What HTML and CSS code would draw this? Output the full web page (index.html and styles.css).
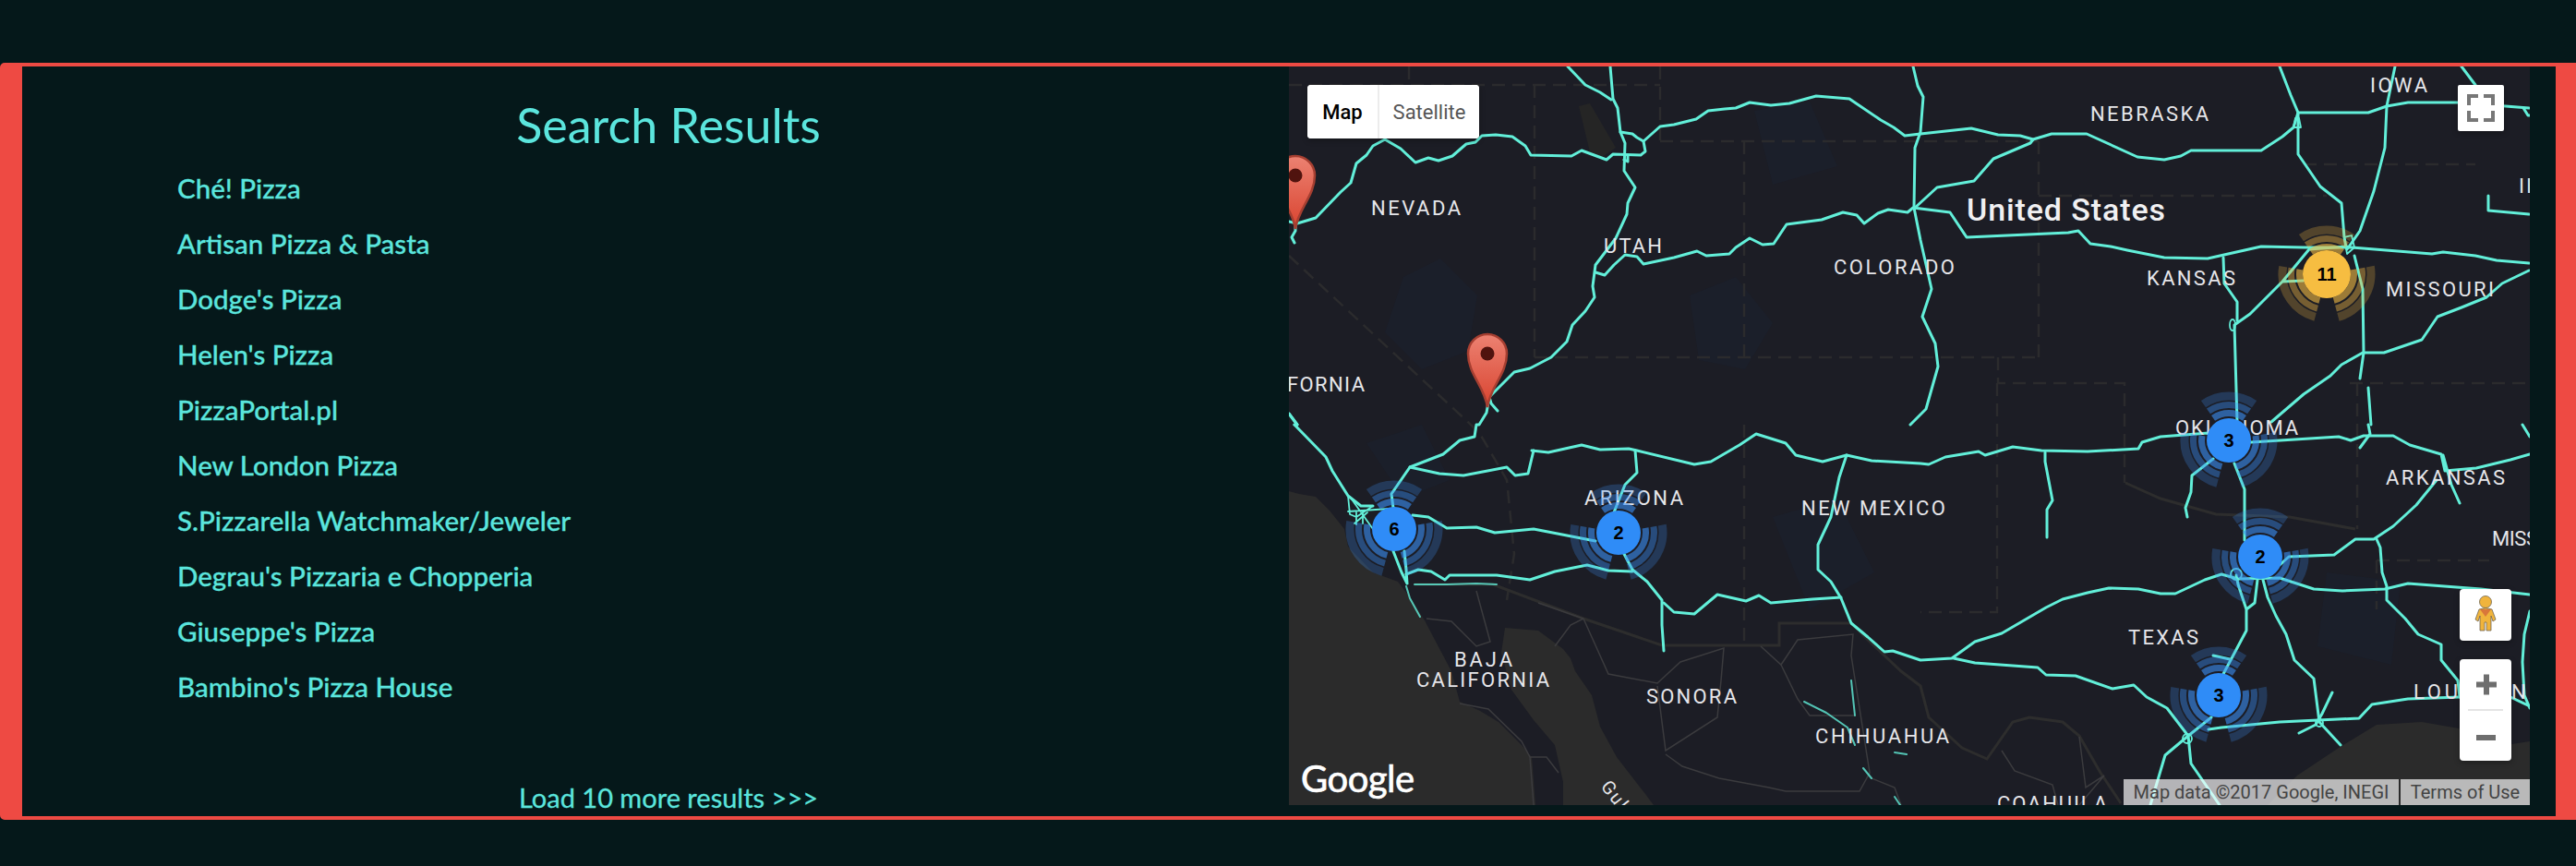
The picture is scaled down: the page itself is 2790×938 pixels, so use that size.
FILE: index.html
```html
<!DOCTYPE html>
<html lang="en">
<head>
<meta charset="utf-8">
<title>Search Results</title>
<link rel="stylesheet" href="styles.css">
</head>
<body>
<main class="panel">
  <section class="results">
    <h1 class="results-title">Search Results</h1>
    <ul class="result-list">
      <li><a href="#">Ché! Pizza</a></li>
      <li><a href="#">Artisan Pizza &amp; Pasta</a></li>
      <li><a href="#">Dodge's Pizza</a></li>
      <li><a href="#">Helen's Pizza</a></li>
      <li><a href="#">PizzaPortal.pl</a></li>
      <li><a href="#">New London Pizza</a></li>
      <li><a href="#">S.Pizzarella Watchmaker/Jeweler</a></li>
      <li><a href="#">Degrau's Pizzaria e Chopperia</a></li>
      <li><a href="#">Giuseppe's Pizza</a></li>
      <li><a href="#">Bambino's Pizza House</a></li>
    </ul>
    <a class="load-more" href="#">Load 10 more results &gt;&gt;&gt;</a>
  </section>

  <section class="map">
    <svg class="map-canvas" viewBox="1396 72 1344 800" width="1344" height="800" xmlns="http://www.w3.org/2000/svg">
      <defs>
        <linearGradient id="pin-fill" x1="0" y1="0" x2="0" y2="1">
          <stop offset="0" stop-color="#ec8272"/>
          <stop offset="1" stop-color="#d9432f"/>
        </linearGradient>
        <g id="pin">
          <path d="M0 0 C-3 -22 -21 -36 -21 -58 A21 21 0 1 1 21 -58 C21 -36 3 -22 0 0 Z" fill="url(#pin-fill)" stroke="#a63f31" stroke-width="2.5"/>
          <circle cx="0" cy="-58" r="7.5" fill="#50130e"/>
        </g>
        <g id="rings" fill="none" transform="rotate(-125)">
          <circle r="29.5" pathLength="360" stroke-dasharray="70 45 85 30 85 45" stroke-width="7" stroke-opacity=".6"/>
          <circle r="38.5" pathLength="360" stroke-dasharray="70 45 85 30 85 45" stroke-width="7" stroke-opacity=".42"/>
          <circle r="48" pathLength="360" stroke-dasharray="70 45 85 30 85 45" stroke-width="9" stroke-opacity=".25"/>
        </g>
      </defs>

      <rect x="1396" y="72" width="1344" height="800" class="land"/>
      <g class="water">
        <path d="M1396 532L1407 535L1425 538L1440 553L1456 573L1460 592L1487 620L1514 630L1527 647L1543 672L1554 693L1572 727L1581 760L1603 770L1623 782L1648 807L1659 820L1663 872L1396 872Z"/>
        <path d="M1630 680L1666 683L1693 703L1701 713L1706 727L1724 753L1733 787L1751 820L1782 860L1791 872L1693 872L1693 847L1684 807L1661 780L1637 747L1626 707Z"/>
        <path d="M2456 872L2488 840L2533 810L2574 785L2623 782L2669 790L2714 807L2740 803L2740 872Z"/>
      </g>
      <g class="patches">
        <path d="M1520 300L1560 280L1600 320L1590 380L1540 400L1500 360Z"/>
        <path d="M1830 320L1880 300L1920 350L1890 400L1840 390Z"/>
        <path d="M1480 480L1540 460L1570 520L1520 540Z"/>
        <path d="M1920 560L1990 540L2030 620L1960 660Z"/>
        <path d="M2520 620L2600 630L2590 720L2510 700Z"/>
        <path d="M1900 120L1960 110L1990 180L1920 200Z"/>
      </g>
      <path class="salt" d="M1710 115L1722 112L1750 160L1735 170L1722 165Z"/>

      <g class="borders-dashed">
        <path d="M1396 92H1798M1526 72V92M1662 92V387M1798 72V153M1798 153H2208M1662 387H2208"/>
        <path d="M1396 277L1593 460L1603 470L1632 520L1640 600L1632 650"/>
        <path d="M1889 153V387M1889 460V699M2208 153V387M2208 212H2520M2164 387V415H2301V523M2545 415H2739M2495 178H2681"/>
        <path d="M2163 415V663H2080M2553 415V573M2574 607H2696M2574 607V660"/>
      </g>
      <g class="borders-solid">
        <path d="M1532 633L1617 633L1715 670L1800 699L1927 699L1927 675L2005 675L2023 693L2059 727L2080 743L2089 777L2125 810L2152 822L2180 782L2198 777L2234 782L2252 797L2275 837L2297 870"/>
        <path d="M2302 523L2340 540L2400 557L2480 560L2551 573"/>
      </g>
      <g class="roads-minor">
        <path d="M1545 670L1572 673L1599 700L1614 695L1599 640"/>
        <path d="M1666 653L1715 670L1742 730L1795 740L1820 717L1867 702L1864 737L1860 777L1804 813L1795 743"/>
        <path d="M1804 817L1822 830L1862 843L1916 853L1934 857L2014 857L2025 837L2005 710L2007 687L1947 693L1929 720L1907 700"/>
        <path d="M1929 720L1947 757L1960 775L2009 775"/>
        <path d="M1581 762L1612 768L1648 803L1657 820L1675 820L1688 837M1661 872L1657 820M1684 700L1701 677L1715 670"/>
        <path d="M2027 843L2052 853L2059 872M2168 813L2182 835L2223 850L2229 872M2252 798L2259 853L2279 840L2252 872"/>
      </g>

      <g class="roads">
        <path d="M1396 240L1405 242L1425 236L1452 208L1463 198L1469 177L1480 168L1487 158L1500 151L1517 161L1533 176L1547 171L1558 174L1573 169L1588 156L1598 154L1605 147L1620 146L1638 148L1652 158L1658 168L1702 169L1713 163L1740 173L1747 167L1777 168L1782 164L1780 153L1798 137L1813 135L1837 129L1850 120L1868 118L1880 117L1895 111L1918 114L1938 112L1967 104L2003 107L2037 130L2051 138L2063 147L2080 145L2135 139L2164 146L2188 147L2202 151L2222 145L2260 145L2315 170L2344 173L2362 169L2373 163L2449 163L2472 148L2484 138L2489 122L2565 122L2585 115L2608 111L2663 111L2739 117"/>
        <path d="M1744 72L1747 107L1752 117L1755 143L1760 155L1759 185L1771 203L1763 220L1762 232L1750 258L1728 287L1725 310L1727 322L1717 337L1703 352L1697 370L1680 387L1657 399L1640 403L1620 423L1613 430L1610 447L1602 460L1599 460L1597 473L1581 477L1563 492L1527 506L1507 535L1509 550"/>
        <path d="M1613 430L1615 437L1622 445M1698 72L1717 92L1733 100L1745 108M1755 143L1768 145L1773 149L1780 153M1759 173L1763 175L1763 168"/>
        <path d="M1403 240L1403 250L1399 257L1402 263M1396 448L1405 460L1402 460"/>
        <path d="M1728 295L1738 298L1748 287L1760 276L1773 278L1780 286L1813 279L1838 272L1848 277L1873 275L1880 268L1895 258L1909 265L1921 264L1935 243L1973 238L1996 230L2011 233L2019 242L2034 231L2045 227L2066 230L2072 225L2112 230L2130 257L2240 252L2251 250L2264 264L2286 267L2304 271L2344 279L2391 280L2449 267L2495 268L2547 268L2634 275L2646 273L2681 277L2704 282L2739 285"/>
        <path d="M2072 72L2077 93L2083 105L2080 143L2074 160L2073 225L2080 260L2092 313L2082 343L2096 372L2099 397L2086 443L2069 460"/>
        <path d="M2074 225L2098 203L2138 196L2159 172L2199 155L2202 151"/>
        <path d="M2469 72L2481 103L2489 122L2489 167L2513 202L2536 220L2539 257L2541 268"/>
        <path d="M2594 72L2585 115L2583 160L2571 207L2556 250L2547 263L2542 270"/>
        <path d="M2542 267L2501 270L2472 305L2437 340L2420 352L2423 457M2408 279L2409 307L2423 327L2423 347M2472 305L2495 304"/>
        <path d="M2550 277L2559 313L2560 382L2556 410"/>
        <path d="M2739 293L2710 307L2693 322L2666 333L2640 343L2623 368L2582 382L2559 382L2536 395L2524 407L2495 427L2460 457"/>
        <path d="M2565 420L2568 460M2666 72L2681 92M2695 212L2695 228L2739 232M2733 117L2738 125L2740 125M2732 460L2740 473"/>
        <path class="thin" d="M2484 138L2492 138L2490 128L2486 128ZM2539 257L2547 255L2550 268L2542 275ZM2415 352a3 6 0 1 0 6 0a3 6 0 1 0 -6 0"/>
        <path d="M1659 488L1677 490L1713 482L1733 487L1764 486L1773 488L1835 503L1853 500L1884 482L1902 470L1934 480L1945 493L1974 500L2000 493L2027 499L2080 502L2089 503L2107 495L2143 489L2150 493L2180 484L2211 488L2261 489L2316 486L2320 479L2340 473L2392 469L2438 479L2533 473L2546 477L2560 472L2592 472L2610 482L2644 492L2648 510L2682 507L2719 498L2740 492"/>
        <path d="M1527 506L1559 513L1585 515L1632 506L1641 515L1655 513L1661 488"/>
        <path d="M1771 488L1773 512L1760 525L1748 555"/>
        <path d="M1402 460L1436 495L1443 510L1460 537L1474 548L1487 548M1396 448L1405 460"/>
        <path class="thin" d="M1460 554L1505 551M1462 538L1487 573M1469 555L1469 568M1476 553L1476 567M1481 555L1467 567M1460 537L1462 557L1469 560L1487 548"/>
        <path d="M1530 558L1547 560L1567 572L1599 571L1619 577L1661 573L1728 586"/>
        <path d="M1509 597L1518 620L1524 632M1521 597L1523 617L1524 632"/>
        <path d="M1523 622L1536 617L1550 619L1565 628L1570 623L1621 623L1657 628L1684 619L1719 612L1742 618L1768 619"/>
        <path d="M1759 600L1768 617L1784 630L1800 650L1800 677L1802 705"/>
        <path d="M1802 653L1813 663L1835 665L1860 644L1891 651L1905 645L1918 653L1963 649L1994 647"/>
        <path d="M2000 493L1992 517L1983 560L1969 590L1969 617L1983 630L1994 648L2005 675L2023 690L2041 706L2050 705L2080 715L2114 713L2139 695L2168 686L2216 658L2234 649L2261 642L2284 637L2316 638L2340 643L2356 643L2388 628L2406 622L2424 627L2469 626L2506 638L2537 640L2583 638L2608 632L2687 638L2740 644"/>
        <path d="M2116 713L2139 718L2207 723L2216 731L2248 732L2288 746L2311 742L2325 755L2347 767L2370 797"/>
        <path d="M2420 502L2431 530L2431 585M2397 497L2374 515L2373 533L2367 550L2369 560"/>
        <path d="M2215 490L2215 500L2223 542L2217 552L2217 582"/>
        <path d="M2422 623L2424 633L2433 660L2433 683L2408 730M2445 628L2442 653L2433 660M2397 710L2415 714"/>
        <path d="M2451 628L2456 647L2465 667L2476 687L2485 715L2506 735L2512 782L2535 807"/>
        <path d="M2392 790L2406 788L2469 782L2555 778L2569 763L2608 757L2664 755L2719 755L2740 765"/>
        <path d="M2526 750L2515 773L2508 785L2490 794M2395 777L2370 797L2345 818L2329 872M2370 797L2373 827L2404 872"/>
        <circle class="thin" cx="2369" cy="800" r="5"/>
        <circle class="thin" cx="2422" cy="622" r="6"/>
        <circle class="thin" cx="2512" cy="783" r="4"/>
        <path d="M2639 520L2617 547L2592 570L2571 584L2551 584L2528 601L2479 603L2469 612M2646 493L2655 525L2664 545"/>
        <path d="M2574 584L2578 593L2580 620L2585 635L2585 650L2605 670L2619 687L2644 698L2644 715L2662 737L2664 755"/>
        <path d="M2740 662L2734 687L2732 717L2734 753L2740 767M2565 460L2567 470L2556 485"/>
      </g>
      <g class="roads roads-faint">
        <path d="M2005 737L2009 775M1954 760L1978 772L2001 788L2009 807M2052 815L2065 817M2018 832L2027 843M2052 863L2058 872M1523 635L1527 648L1538 668M1532 633L1567 633L1599 632L1621 633"/>
      </g>

      <g class="labels">
        <text x="1485" y="233" textLength="97">NEVADA</text>
        <text x="1737" y="274" textLength="63">UTAH</text>
        <text x="1394" y="424" textLength="84">FORNIA</text>
        <text x="2264" y="131" textLength="128">NEBRASKA</text>
        <text x="2567" y="100" textLength="62">IOWA</text>
        <text x="1986" y="297" textLength="131">COLORADO</text>
        <text x="2325" y="309" textLength="96">KANSAS</text>
        <text x="2584" y="321" textLength="117">MISSOURI</text>
        <text x="2728" y="209" textLength="20">IL</text>
        <text x="2356" y="471" textLength="133">OKLAHOMA</text>
        <text x="1716" y="547" textLength="107">ARIZONA</text>
        <text x="1951" y="558" textLength="156">NEW MEXICO</text>
        <text x="1575" y="722" textLength="63">BAJA</text>
        <text x="1534" y="744" textLength="144">CALIFORNIA</text>
        <text x="1783" y="762" textLength="98">SONORA</text>
        <text x="1966" y="805" textLength="145">CHIHUAHUA</text>
        <text x="2305" y="698" textLength="76">TEXAS</text>
        <text x="2584" y="525" textLength="129">ARKANSAS</text>
        <text x="2699" y="591" textLength="50">MISS</text>
        <text x="2614" y="757" textLength="140">LOUISIANA</text>
        <text x="2163" y="878" textLength="119">COAHUILA</text>
        <text class="label-gulf" x="1733" y="852" transform="rotate(52 1733 852)">Gulf</text>
        <text class="label-country" x="2130" y="239" textLength="215">United States</text>
      </g>

      <use href="#pin" x="1403" y="248"/>
      <use href="#pin" x="1611" y="441"/>

      <g class="cluster cluster-yellow" transform="translate(2520 297)">
        <use href="#rings"/><circle r="26"/><text y="7">11</text>
      </g>
      <g class="cluster" transform="translate(1510 573)">
        <use href="#rings"/><circle r="24"/><text y="7">6</text>
      </g>
      <g class="cluster" transform="translate(1753 577)">
        <use href="#rings"/><circle r="24"/><text y="7">2</text>
      </g>
      <g class="cluster" transform="translate(2414 477)">
        <use href="#rings"/><circle r="24"/><text y="7">3</text>
      </g>
      <g class="cluster" transform="translate(2448 603)">
        <use href="#rings"/><circle r="24"/><text y="7">2</text>
      </g>
      <g class="cluster" transform="translate(2403 753)">
        <use href="#rings"/><circle r="24"/><text y="7">3</text>
      </g>
    </svg>

    <div class="map-type">
      <button class="map-type-btn map-type-active">Map</button>
      <button class="map-type-btn map-type-sat">Satellite</button>
    </div>

    <button class="ctrl ctrl-fullscreen" aria-label="Fullscreen">
      <svg viewBox="0 0 50 50" width="50" height="50"><path d="M22 12H12V22M28 12H38V22M22 38H12V28M28 38H38V28" fill="none" stroke="#777" stroke-width="4"/></svg>
    </button>

    <button class="ctrl ctrl-pegman" aria-label="Street View">
      <svg viewBox="0 0 56 56" width="56" height="56">
        <circle cx="28" cy="14" r="6.500" fill="#f0b43c" stroke="#6e6654" stroke-width=".8"/>
        <path d="M21 22Q28 19 35 22L39 33L36 35L34 29V45H29V36H27V45H22V29L20 35L17 33Z" fill="#f0b43c" stroke="#6e6654" stroke-width=".8"/>
        <path d="M22 22H34L28 30Z" fill="#d9773a"/>
      </svg>
    </button>

    <div class="ctrl-zoom">
      <button class="zoom-btn" aria-label="Zoom in">
        <svg viewBox="0 0 56 54" width="56" height="54"><path d="M26 16.500h6v8h8v6h-8v8h-6v-8h-8v-6h8z" fill="#6e6e6e"/></svg>
      </button>
      <span class="zoom-sep"></span>
      <button class="zoom-btn" aria-label="Zoom out">
        <svg viewBox="0 0 56 54" width="56" height="54"><path d="M18 26h21v6h-21z" fill="#6e6e6e"/></svg>
      </button>
    </div>

    <span class="google-logo">Google</span>

    <div class="attribution">
      <span class="attr-item attr-data">Map data ©2017 Google, INEGI</span>
      <span class="attr-item attr-terms">Terms of Use</span>
    </div>
  </section>
</main>
</body>
</html>
```
FILE: styles.css
```css
* { box-sizing: border-box; }

html, body {
  margin: 0;
  height: 938px;
  overflow: hidden;
  background: #05181a;
}

.panel {
  display: flex;
  height: 820px;
  margin-top: 68px;
  border-style: solid;
  border-color: #ee4a43;
  border-width: 4px 22px 4px 24px;
  border-radius: 5px 0 0 5px;
}

/* results column */
.results {
  flex: 0 0 1372px;
  display: flex;
  flex-direction: column;
  padding-left: 28px;
  font-family: Lato, "Open Sans", sans-serif;
  color: #5be5dd;
}

.results a { color: inherit; text-decoration: none; }

.results-title {
  margin: 33px 0 0;
  font-size: 52px;
  line-height: 60px;
  font-weight: 400;
  text-align: center;
}

.result-list {
  list-style: none;
  margin: 9px 0 0;
  padding: 0 0 0 140px;
  font-size: 29.5px;
  font-weight: 500;
  -webkit-text-stroke: .3px #5be5dd;
}

.result-list li {
  height: 60px;
  line-height: 60px;
}

.load-more {
  margin-top: auto;
  text-align: center;
  font-size: 29px;
  line-height: 40px;
  -webkit-text-stroke: .3px #5be5dd;
}

/* map */
.map {
  position: relative;
  flex: 0 0 1344px;
  height: 800px;
  overflow: hidden;
  background: #1c1d25;
  font-family: Roboto, sans-serif;
}

.map-canvas { display: block; }

.land { fill: #1c1d25; }
.water { fill: #2b2b2b; }
.patches { fill: #1b1f2a; }
.salt { fill: #252525; }

.borders-dashed {
  fill: none;
  stroke: #2b2b2d;
  stroke-width: 2.5;
  stroke-dasharray: 14 8;
}

.borders-solid {
  fill: none;
  stroke: #2d2d2d;
  stroke-width: 3;
}

.roads-minor {
  fill: none;
  stroke: #3b3b3e;
  stroke-width: 1.500;
}

.roads {
  fill: none;
  stroke: #62efd9;
  stroke-width: 3;
  stroke-linejoin: round;
  stroke-linecap: round;
}

.roads .thin { stroke-width: 1.800; }
.roads-faint { stroke-width: 2; opacity: .8; }

.labels text {
  font-family: Roboto, sans-serif;
  font-size: 22px;
  fill: #e6e6ea;
}

.labels .label-country {
  font-size: 34px;
  font-weight: 500;
  fill: #f0f0f2;
}

.labels .label-gulf { font-size: 20px; letter-spacing: 2px; }

.cluster { stroke: #3a8ff5; }
.cluster > circle { fill: #2f8cf7; stroke: none; }
.cluster-yellow { stroke: #f2bb45; }
.cluster-yellow > circle { fill: #f6bd41; }

.cluster text {
  fill: #000;
  stroke: none;
  font-family: "Liberation Sans", Arial, sans-serif;
  font-size: 20px;
  font-weight: 700;
  text-anchor: middle;
}

/* controls */
button {
  padding: 0;
  border: 0;
  background: #fff;
  font: inherit;
}

.map-type {
  position: absolute;
  left: 20px;
  top: 20px;
  display: flex;
  height: 58px;
  background: #fff;
  border-radius: 4px;
  overflow: hidden;
  box-shadow: 0 2px 6px rgba(0, 0, 0, .3);
  font-size: 22px;
}

.map-type-btn { height: 58px; }
.map-type-active { width: 76px; color: #000; font-weight: 500; }
.map-type-sat { width: 110px; color: #565656; border-left: 2px solid #ececec; }

.ctrl {
  position: absolute;
  display: block;
  background: #fff;
  border-radius: 2px;
  box-shadow: 0 2px 6px rgba(0, 0, 0, .3);
}

.ctrl svg { display: block; }

.ctrl-fullscreen { left: 1266px; top: 20px; width: 50px; height: 50px; }
.ctrl-pegman { left: 1268px; top: 566px; width: 56px; height: 56px; border-radius: 4px; }

.ctrl-zoom {
  position: absolute;
  left: 1268px;
  top: 642px;
  width: 56px;
  height: 110px;
  display: flex;
  flex-direction: column;
  align-items: center;
  background: #fff;
  border-radius: 4px;
  box-shadow: 0 2px 6px rgba(0, 0, 0, .3);
}

.zoom-btn { display: block; height: 54px; width: 56px; background: none; }
.zoom-btn svg { display: block; }
.zoom-sep { flex: 0 0 2px; width: 38px; background: #e4e4e4; }

.google-logo {
  position: absolute;
  left: 13px;
  bottom: 4px;
  font-family: Lato, sans-serif;
  font-size: 40px;
  line-height: 50px;
  letter-spacing: -.5px;
  color: #fff;
  -webkit-text-stroke: .7px #fff;
}

.attribution {
  position: absolute;
  right: 0;
  bottom: 0;
  display: flex;
  gap: 2px;
  height: 28px;
  font-size: 20px;
  line-height: 28px;
  color: #444;
}

.attr-item { background: rgba(255, 255, 255, .67); text-align: center; }
.attr-data { width: 298px; }
.attr-terms { width: 140px; }
```
